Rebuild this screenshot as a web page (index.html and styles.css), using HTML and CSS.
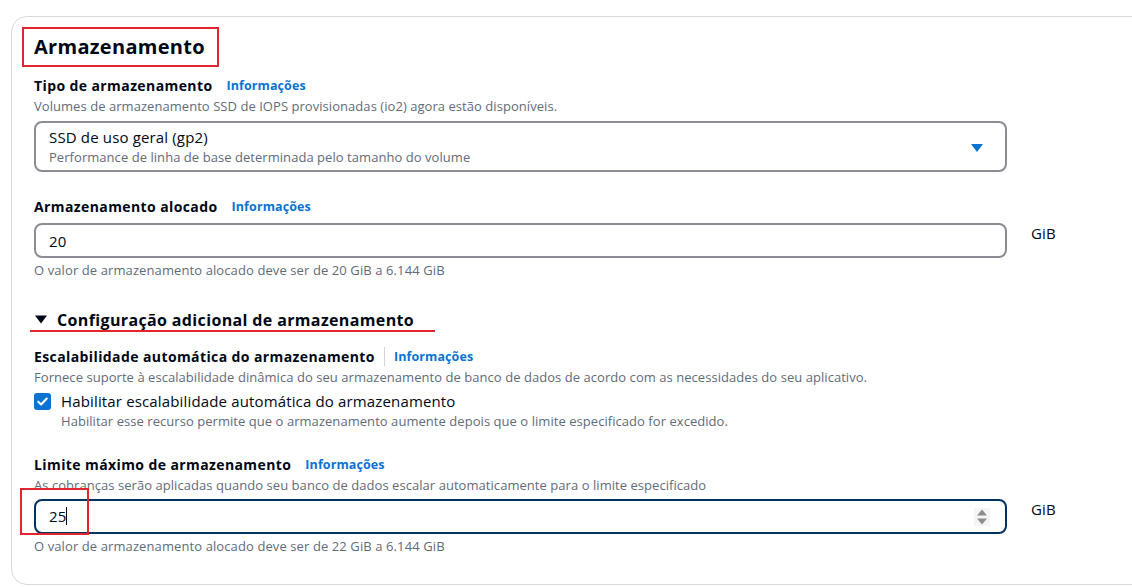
FILE: index.html
```html
<!DOCTYPE html>
<html lang="pt">
<head>
<meta charset="utf-8">
<link rel="stylesheet" href="styles.css">
</head>
<body>
<div class="card">
  <h2 class="title"><span class="title-box">Armazenamento</span></h2>

  <div class="field">
    <div class="label-row"><span class="label">Tipo de armazenamento</span><a class="info">Informações</a></div>
    <div class="desc">Volumes de armazenamento SSD de IOPS provisionadas (io2) agora estão disponíveis.</div>
    <div class="select">
      <div class="select-text">
        <div class="select-main">SSD de uso geral (gp2)</div>
        <div class="select-sub">Performance de linha de base determinada pelo tamanho do volume</div>
      </div>
      <svg class="caret" width="12" height="8" viewBox="0 0 12 8"><path d="M0 0h12L6 8z" fill="#0972d3"/></svg>
    </div>
  </div>

  <div class="field alloc">
    <div class="label-row"><span class="label">Armazenamento alocado</span><a class="info">Informações</a></div>
    <div class="input-row">
      <div class="input-col">
        <div class="input">20</div>
        <div class="hint">O valor de armazenamento alocado deve ser de 20 GiB a 6.144 GiB</div>
      </div>
      <span class="unit">GiB</span>
    </div>
  </div>

  <div class="expander">
    <span class="exp-head">
      <svg class="exp-caret" width="12" height="9" viewBox="0 0 12 9"><path d="M0 0.5h12L6 8.5z" fill="#000716"/></svg>
      Configuração adicional de armazenamento
    </span>
  </div>

  <div class="field autoscale">
    <div class="label-row"><span class="label">Escalabilidade automática do armazenamento</span><span class="sep"></span><a class="info">Informações</a></div>
    <div class="desc">Fornece suporte à escalabilidade dinâmica do seu armazenamento de banco de dados de acordo com as necessidades do seu aplicativo.</div>
    <div class="check-row">
      <span class="checkbox"><svg width="18" height="18" viewBox="0 0 18 18"><path d="M4.5 9.2l3 3 6-6.4" fill="none" stroke="#fff" stroke-width="2.2" stroke-linecap="round" stroke-linejoin="round"/></svg></span>
      <div class="check-text">
        <div class="check-label">Habilitar escalabilidade automática do armazenamento</div>
        <div class="desc">Habilitar esse recurso permite que o armazenamento aumente depois que o limite especificado for excedido.</div>
      </div>
    </div>
  </div>

  <div class="field limit">
    <div class="label-row"><span class="label">Limite máximo de armazenamento</span><a class="info">Informações</a></div>
    <div class="desc">As cobranças serão aplicadas quando seu banco de dados escalar automaticamente para o limite especificado</div>
    <div class="input-row">
      <div class="input-col">
        <div class="input focused"><span class="val">25</span><span class="cursor"></span>
          <svg class="spin" width="16" height="18" viewBox="0 0 16 18"><rect width="16" height="18" fill="#f5f5f5"/><path d="M3 7.5L8 1.5 13 7.5z M3 10.5L8 16.5 13 10.5z" fill="#8d8d8d"/></svg>
          <span class="mark"></span>
        </div>
        <div class="hint">O valor de armazenamento alocado deve ser de 22 GiB a 6.144 GiB</div>
      </div>
      <span class="unit">GiB</span>
    </div>
  </div>
</div>
</body>
</html>
```

FILE: styles.css
```css
* { box-sizing: border-box; }
html, body { margin: 0; padding: 0; background: #fff; }
body {
  font-family: "Open Sans", "Noto Sans", Arial, sans-serif;
  color: #000716;
  font-size: 15px;
  letter-spacing: 0.15px;
  line-height: 20px;
  overflow: hidden;
  width: 1132px;
  height: 587px;
}
.card {
  margin: 16px -40px 0 11px;
  border: 1px solid #d9d9d9;
  border-radius: 16px;
  padding: 10px 22px 0 22px;
  height: 569px;
}
.title { margin: 0; font-size: 20px; line-height: 24px; font-weight: 700; }
.title-box {
  display: inline-block;
  margin-left: -12px;
  padding: 6px 12px 6px 10px;
  border: 2px solid #e3262d;
  letter-spacing: 0.3px;
}
.field { margin-top: 9px; }
.label-row { display: flex; align-items: center; height: 20px; }
.label { font-weight: 700; font-size: 14px; letter-spacing: 0.4px; }
.info { color: #0972d3; font-weight: 700; font-size: 12.5px; letter-spacing: 0.1px; margin-left: 14px; text-decoration: none; }
.desc { font-size: 13px; letter-spacing: 0.05px; line-height: 16px; color: #5f6b7a; margin-top: 2px; }
.select {
  width: 973px;
  margin-top: 7px;
  border: 2px solid #8c8c94;
  border-radius: 8px;
  padding: 4px 22px 5px 13px;
  display: flex;
  align-items: center;
  justify-content: space-between;
}
.select-main { line-height: 20px; }
.select-sub { font-size: 13px; letter-spacing: 0.05px; line-height: 16px; color: #5f6b7a; margin-top: 2px; }
.caret { margin-top: 4px; }
.alloc { margin-top: 25px; }
.input-row { display: flex; align-items: flex-start; gap: 24px; margin-top: 6px; }
.input-col { width: 973px; }
.input {
  position: relative;
  height: 35px;
  border: 2px solid #8c8c94;
  border-radius: 8px;
  padding: 5px 13px;
  line-height: 20px;
  display: flex;
  align-items: center;
}
.input.focused { border-color: #033160; }
.hint { font-size: 13px; letter-spacing: 0.1px; line-height: 16px; color: #5f6b7a; margin-top: 4px; }
.unit { line-height: 20px; }
.expander { margin-top: 30px; }
.exp-head {
  display: inline-flex;
  align-items: center;
  gap: 10px;
  margin-left: -4px;
  padding: 0 21px 0 5px;
  border-bottom: 2px solid #e3262d;
  font-size: 16px;
  letter-spacing: 0.36px;
  line-height: 20px;
  font-weight: 700;
}
.autoscale { margin-top: 15px; }
.sep { width: 1px; height: 19px; background: #d1d5db; margin: 0 9px 0 9px; }
.autoscale .info { margin-left: 0; }
.check-row { display: flex; gap: 10px; margin-top: 6px; }
.checkbox {
  width: 17px; height: 17px;
  margin-top: 2px;
  border-radius: 3px;
  background: #0972d3;
  display: flex; align-items: center; justify-content: center;
  flex: none;
}
.checkbox svg { width: 17px; height: 17px; }
.check-label { line-height: 20px; }
.check-text .desc { margin-top: 2px; }
.limit { margin-top: 26px; }
.cursor { display: inline-block; width: 1px; height: 18px; background: #000; }
.spin { position: absolute; right: 15px; top: 7px; }
.mark {
  position: absolute;
  left: -16px;
  top: -13px;
  width: 69px;
  height: 47px;
  border: 2px solid #e3262d;
  pointer-events: none;
}
```
